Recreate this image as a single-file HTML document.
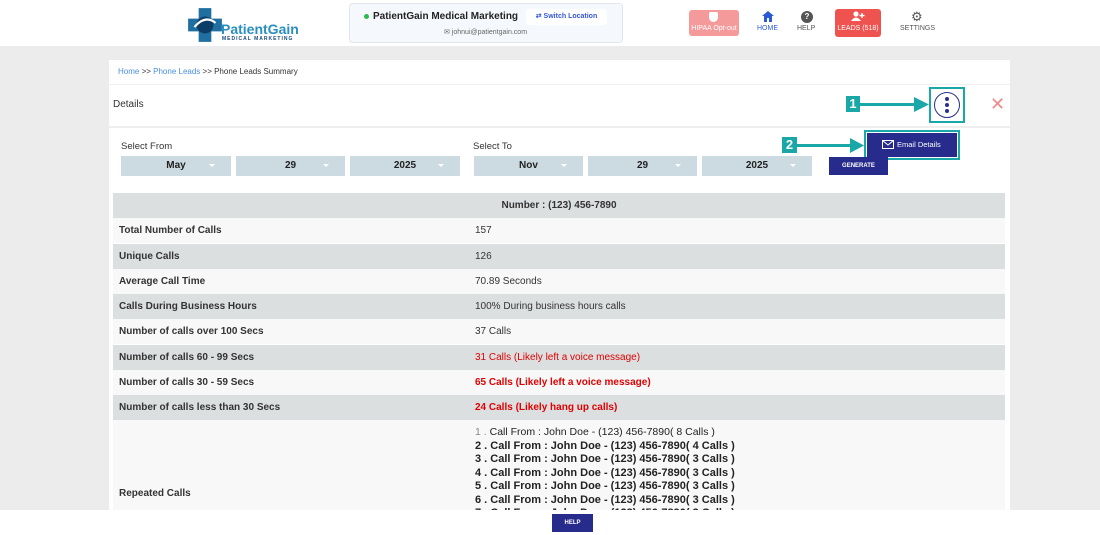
<!DOCTYPE html>
<html><head><style>
*{margin:0;padding:0;box-sizing:border-box}
body{width:1100px;height:535px;overflow:hidden;background:#ececec;font-family:"Liberation Sans",Arial,sans-serif;position:relative}
.hdr{position:absolute;left:0;top:0;width:1100px;height:46px;background:#fff}
.abs{position:absolute}
.card{position:absolute;left:109px;top:60px;width:901px;height:470px;background:#fff}
.sel{position:absolute;height:20px;background:#ccdbe2;font-size:10px;font-weight:bold;color:#222;text-align:center;line-height:20px}
.sel:after{content:"";position:absolute;right:16px;top:8px;border:3px solid transparent;border-top-color:#fff}
.row{position:absolute;left:113px;width:892px;height:25px;font-size:10px;color:#333;line-height:26px}
.row b{position:absolute;left:6px;color:#333}
.row span{position:absolute;left:362px}
.g{background:#dcdfe0}.w{background:#f8f8f8}
.row span.red{color:#e00000}
.rep{position:absolute;left:475px;font-size:11px;font-weight:bold;color:#222;line-height:13.5px}
</style></head><body>
<div class="hdr">
 <svg class="abs" style="left:186px;top:6px" width="38" height="38" viewBox="0 0 36 36"><path d="M12 2h12v10h10v12H24v10H12V24H2V12h10z" fill="#1f6fa0"/><circle cx="18" cy="18" r="8" fill="#0d3d66"/><path d="M8 20q10 -12 20 -4" stroke="#fff" stroke-width="2" fill="none"/></svg>
 <div class="abs" style="left:221px;top:21px;font-size:14px;color:#2a8fc0;font-weight:bold">PatientGain</div>
 <div class="abs" style="left:222px;top:36px;font-size:5px;color:#1a4a7a;letter-spacing:1px;font-weight:bold">MEDICAL MARKETING</div>
 <div class="abs" style="left:349px;top:3px;width:274px;height:40px;background:#f5f8fc;border:1px solid #e2e6ec;border-radius:4px"></div>
 <div class="abs" style="left:364px;top:14px;width:5px;height:5px;border-radius:50%;background:#2db84d"></div>
 <div class="abs" style="left:373px;top:11px;font-size:10px;color:#222;font-weight:bold">PatientGain Medical Marketing</div>
 <div class="abs" style="left:526px;top:9px;width:81px;height:16px;background:#fff;border-radius:3px;font-size:7px;color:#3557d6;font-weight:bold;line-height:16px;text-align:center">⇄ Switch Location</div>
 <div class="abs" style="left:444px;top:28px;font-size:7px;color:#666">✉ johnui@patientgain.com</div>
 <div class="abs" style="left:689px;top:10px;width:50px;height:26px;background:#f59a9a;border-radius:3px;color:#fff;font-size:7px;text-align:center;padding-top:15px">HIPAA Opt-out</div>
 <div class="abs" style="left:709px;top:12px;width:9px;height:10px;background:#fff;border-radius:2px 2px 5px 5px"></div>
 <svg class="abs" style="left:762px;top:11px" width="12" height="11" viewBox="0 0 12 11"><path d="M6 0L0 5h2v6h3V7h2v4h3V5h2z" fill="#2a5bd7"/></svg>
 <div class="abs" style="left:757px;top:25px;font-size:7px;color:#2a5bd7">HOME</div>
 <div class="abs" style="left:801px;top:11px;width:12px;height:12px;border-radius:50%;background:#555;color:#fff;font-size:8px;font-weight:bold;text-align:center;line-height:12px">?</div>
 <div class="abs" style="left:797px;top:25px;font-size:7px;color:#555">HELP</div>
 <div class="abs" style="left:835px;top:9px;width:46px;height:28px;background:#ef5350;border-radius:3px;color:#fff;font-size:7px;text-align:center;padding-top:16px">LEADS (518)</div>
 <svg class="abs" style="left:851px;top:11px" width="14" height="10" viewBox="0 0 14 10"><circle cx="5" cy="3" r="2.6" fill="#fff"/><path d="M0 10q5-7 10 0z" fill="#fff"/><path d="M11 2v5M8.5 4.5h5" stroke="#fff" stroke-width="1.4"/></svg>
 <div class="abs" style="left:911px;top:9px;font-size:13px;color:#555">⚙</div>
 <div class="abs" style="left:900px;top:25px;font-size:7px;color:#555">SETTINGS</div>
</div>
<div class="card"></div>
<div class="abs" style="left:118px;top:67px;font-size:8px;color:#333"><span style="color:#4a90e2">Home</span> &gt;&gt; <span style="color:#4a90e2">Phone Leads</span> &gt;&gt; Phone Leads Summary</div>
<div class="abs" style="left:109px;top:84px;width:901px;height:1px;background:#f0f0f0"></div>
<div class="abs" style="left:113px;top:99px;font-size:10px;color:#333">Details</div>
<div class="abs" style="left:109px;top:126px;width:901px;height:2px;background:#eee"></div>
<div class="abs" style="left:929px;top:87px;width:36px;height:36px;border:2px solid #19a7a8"></div>
<div class="abs" style="left:934px;top:92px;width:26px;height:26px;border:1px solid #26308f;border-radius:50%"></div>
<div class="abs" style="left:945px;top:97px;width:4px;height:4px;background:#26308f;border-radius:50%;box-shadow:0 6px 0 #26308f,0 12px 0 #26308f"></div>
<div class="abs" style="left:990px;top:94px;font-size:18px;color:#f08a8a">✕</div>
<div class="abs" style="left:846px;top:96px;width:14px;height:16px;background:#19a7a8;color:#fff;font-size:13px;font-weight:bold;text-align:center;line-height:16px">1</div>
<div class="abs" style="left:860px;top:103px;width:62px;height:3px;background:#19a7a8"></div>
<svg class="abs" style="left:914px;top:97px" width="15" height="15"><path d="M0 0L15 7.5L0 15z" fill="#19a7a8"/></svg>
<div class="abs" style="left:782px;top:137px;width:15px;height:16px;background:#19a7a8;color:#fff;font-size:13px;font-weight:bold;text-align:center;line-height:16px">2</div>
<div class="abs" style="left:797px;top:144px;width:55px;height:3px;background:#19a7a8"></div>
<svg class="abs" style="left:850px;top:138px" width="14" height="15"><path d="M0 0L14 7.5L0 15z" fill="#19a7a8"/></svg>
<div class="abs" style="left:864px;top:130px;width:96px;height:30px;border:2px solid #19a7a8"></div>
<div class="abs" style="left:867px;top:133px;width:90px;height:24px;background:#262b8c;color:#fff;font-size:7.5px;line-height:24px;padding-left:30px">Email Details</div>
<svg class="abs" style="left:882px;top:140px" width="13" height="10"><rect x="0.5" y="0.5" width="11" height="8" fill="none" stroke="#fff"/><path d="M0.5 0.5L6 5L11.5 0.5" stroke="#fff" fill="none"/></svg>
<div class="abs" style="left:121px;top:141px;font-size:9.5px;color:#333">Select From</div>
<div class="abs" style="left:473px;top:141px;font-size:9.5px;color:#333">Select To</div>
<div class="sel" style="left:121px;top:156px;width:110px">May</div>
<div class="sel" style="left:236px;top:156px;width:109px">29</div>
<div class="sel" style="left:350px;top:156px;width:110px">2025</div>
<div class="sel" style="left:474px;top:156px;width:109px">Nov</div>
<div class="sel" style="left:588px;top:156px;width:109px">29</div>
<div class="sel" style="left:702px;top:156px;width:110px">2025</div>
<div class="abs" style="left:829px;top:157px;width:59px;height:18px;background:#262b8c;color:#fff;font-size:6px;font-weight:bold;text-align:center;line-height:18px">GENERATE</div>
<div class="row g" style="top:193px;text-align:center;font-weight:bold">Number : (123) 456-7890</div>
<div class="row w" style="top:218px"><b>Total Number of Calls</b><span>157</span></div>
<div class="row g" style="top:244px"><b>Unique Calls</b><span>126</span></div>
<div class="row w" style="top:269px"><b>Average Call Time</b><span>70.89 Seconds</span></div>
<div class="row g" style="top:294px"><b>Calls During Business Hours</b><span>100% During business hours calls</span></div>
<div class="row w" style="top:319px"><b>Number of calls over 100 Secs</b><span>37 Calls</span></div>
<div class="row g" style="top:345px"><b>Number of calls 60 - 99 Secs</b><span class="red">31 Calls (Likely left a voice message)</span></div>
<div class="row w" style="top:370px"><b>Number of calls 30 - 59 Secs</b><span class="red" style="font-weight:bold">65 Calls (Likely left a voice message)</span></div>
<div class="row g" style="top:395px"><b>Number of calls less than 30 Secs</b><span class="red" style="font-weight:bold">24 Calls (Likely hang up calls)</span></div>
<div class="row w" style="top:420px;height:95px"><b style="top:61px">Repeated Calls</b></div>
<div class="rep" style="top:426px"><span style="font-weight:normal;font-size:10.5px"><span style="color:#888">1 .</span> Call From : John Doe - (123) 456-7890( 8 Calls )</span><br>2 . Call From : John Doe - (123) 456-7890( 4 Calls )<br>3 . Call From : John Doe - (123) 456-7890( 3 Calls )<br>4 . Call From : John Doe - (123) 456-7890( 3 Calls )<br>5 . Call From : John Doe - (123) 456-7890( 3 Calls )<br>6 . Call From : John Doe - (123) 456-7890( 3 Calls )<br>7 . Call From : John Doe - (123) 456-7890( 3 Calls )</div>
<div class="abs" style="left:0;top:510px;width:1100px;height:25px;background:#fff"></div>
<div class="abs" style="left:552px;top:514px;width:41px;height:18px;background:#262b8c;color:#fff;font-size:6px;font-weight:bold;text-align:center;line-height:18px">HELP</div>
</body></html>
